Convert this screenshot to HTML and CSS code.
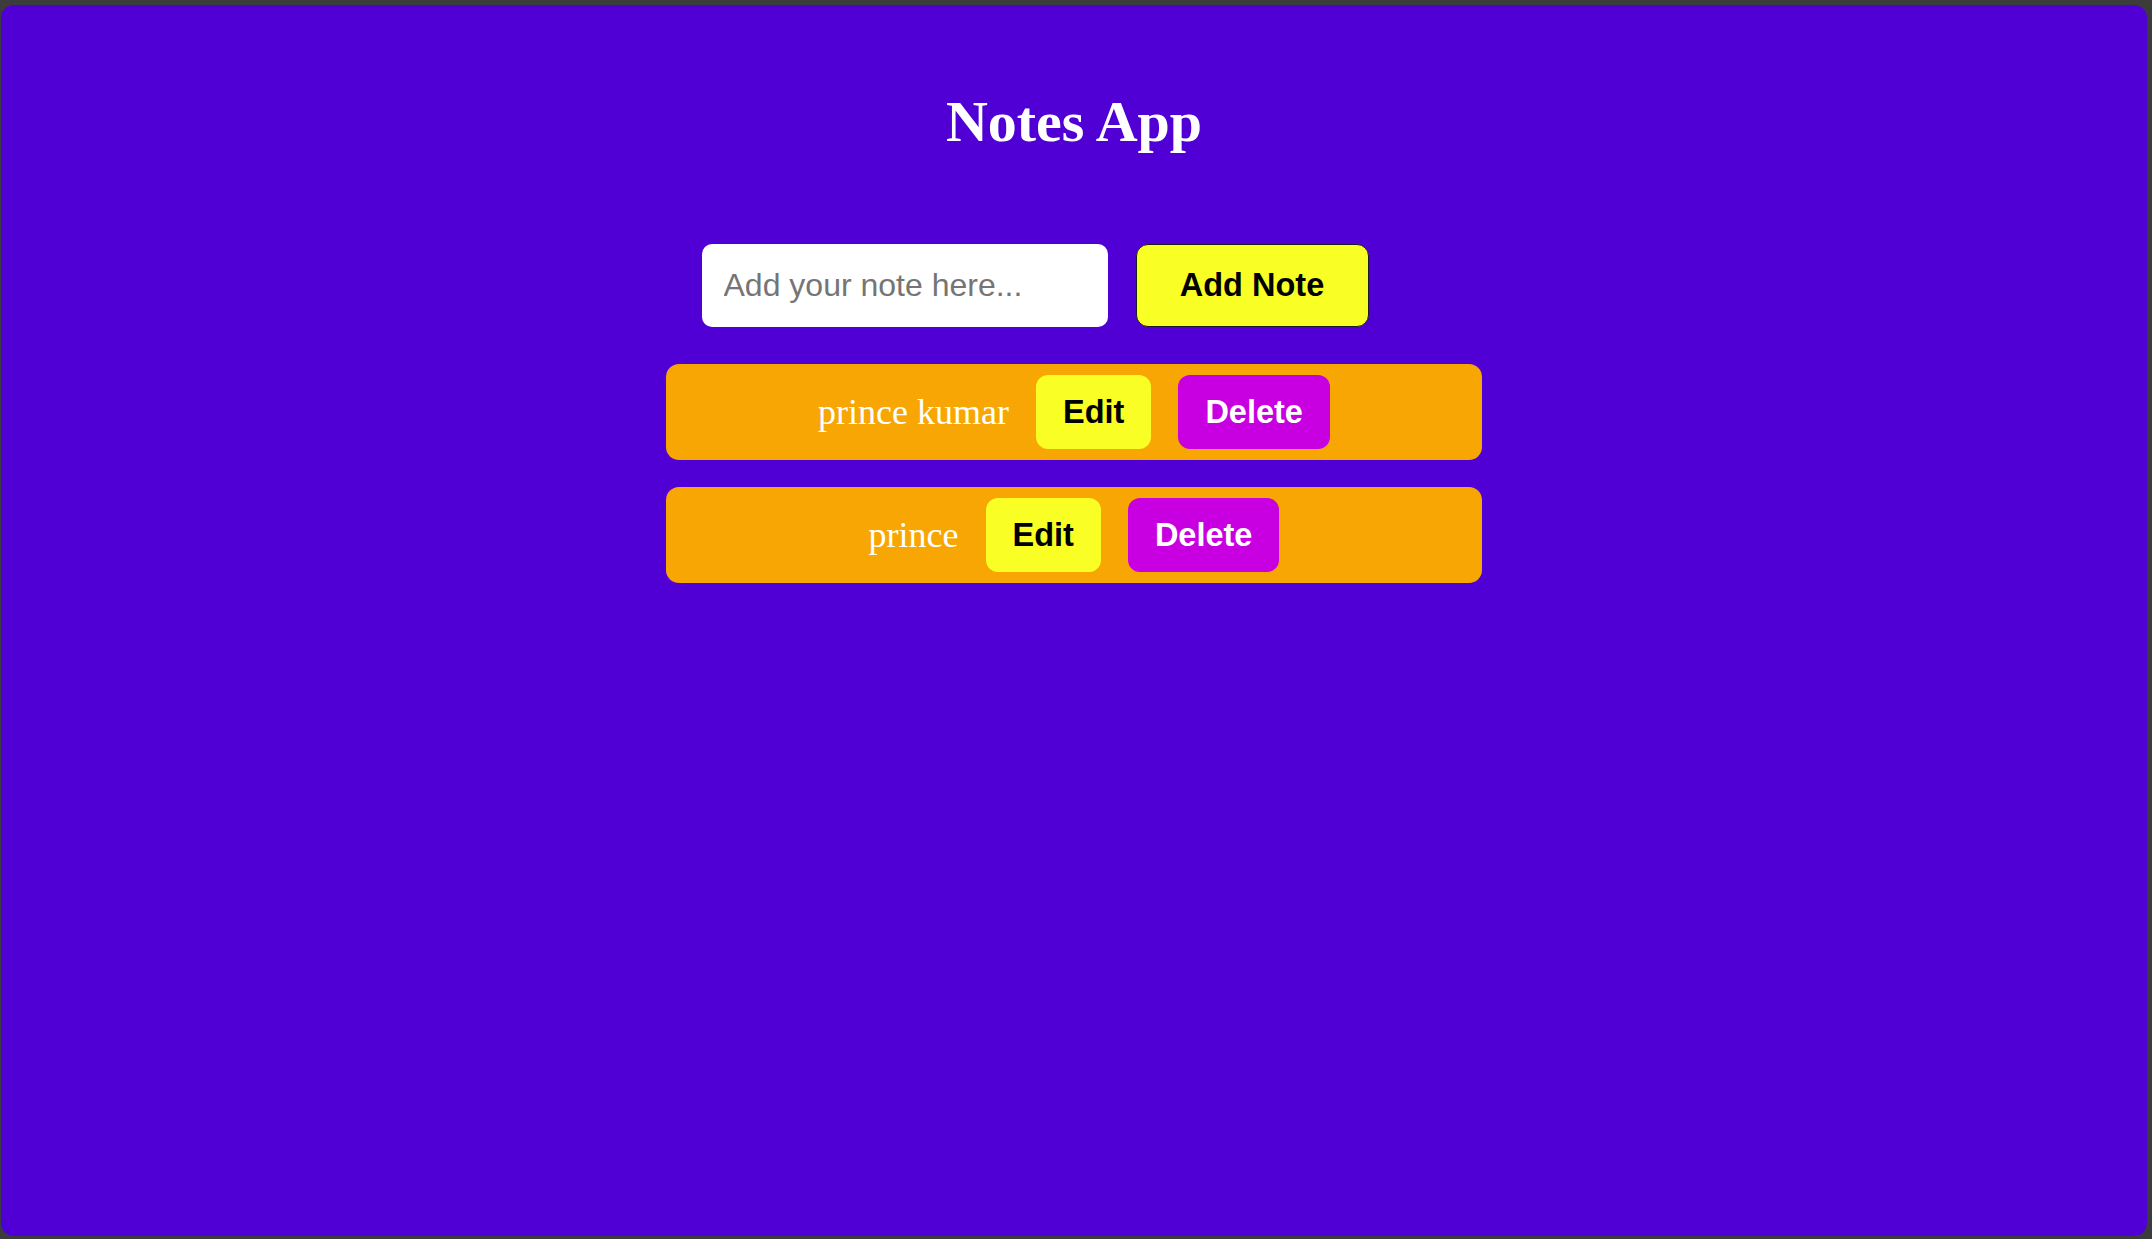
FILE: index.html
```html
<!DOCTYPE html>
<html lang="en">
<head>
<meta charset="UTF-8">
<title>Notes App</title>
<link rel="stylesheet" href="styles.css">
</head>
<body>
  <div class="app">
    <h1 class="title">Notes App</h1>
    <div class="note-form">
      <input class="note-input" type="text" placeholder="Add your note here...">
      <button class="add-btn">Add Note</button>
    </div>
    <div class="notes">
      <div class="note">
        <span class="note-text">prince kumar</span>
        <button class="btn btn-edit">Edit</button>
        <button class="btn btn-delete">Delete</button>
      </div>
      <div class="note">
        <span class="note-text">prince</span>
        <button class="btn btn-edit">Edit</button>
        <button class="btn btn-delete">Delete</button>
      </div>
    </div>
  </div>
</body>
</html>
```

FILE: styles.css
```css
html, body {
  margin: 0;
  height: 100%;
}

body {
  background: #3c3c3c;
  padding: 5px 5px 3px 1px;
  box-sizing: border-box;
}

.app {
  height: 100%;
  box-sizing: border-box;
  background: #5000d5;
  border-radius: 13px;
  padding-top: 84px;
}

.title {
  margin: 0;
  font-family: "Liberation Serif", "Times New Roman", serif;
  font-weight: bold;
  font-size: 58px;
  line-height: 66px;
  text-align: center;
  color: #ffffff;
}

.note-form {
  display: flex;
  justify-content: center;
  gap: 28px;
  margin-top: 89px;
  padding-right: 78px;
}

.note-input {
  width: 406px;
  height: 83px;
  box-sizing: border-box;
  border: none;
  border-radius: 10px;
  padding: 0 22px;
  background: #ffffff;
  font-family: "Liberation Sans", Arial, sans-serif;
  font-size: 32px;
  color: #000;
  outline: none;
}

.note-input::placeholder {
  color: #757575;
}

.add-btn {
  width: 233px;
  height: 83px;
  box-sizing: border-box;
  border: 1px solid #1c1c1c;
  border-radius: 12px;
  background: #f9ff24;
  color: #000;
  font-family: "Liberation Sans", Arial, sans-serif;
  font-weight: bold;
  font-size: 32.5px;
  padding: 0;
}

.notes {
  width: 816px;
  margin: 37px auto 0;
  display: flex;
  flex-direction: column;
  gap: 27px;
}

.note {
  display: flex;
  align-items: center;
  justify-content: center;
  gap: 27px;
  padding: 11px;
  background: #f8a604;
  border-radius: 13px;
}

.note-text {
  font-family: "Liberation Serif", "Times New Roman", serif;
  font-size: 36px;
  color: #ffffff;
}

.btn {
  height: 74px;
  padding: 0 27px;
  border: none;
  border-radius: 12px;
  font-family: "Liberation Sans", Arial, sans-serif;
  font-weight: bold;
  font-size: 32.5px;
}

.btn-edit {
  background: #f9ff24;
  color: #000;
}

.btn-delete {
  background: #c800e1;
  color: #ffffff;
}
```
